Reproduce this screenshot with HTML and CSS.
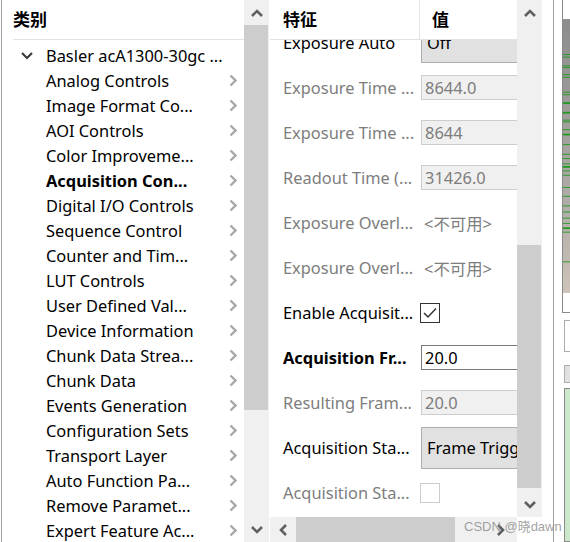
FILE: index.html
```html
<!DOCTYPE html>
<html lang="zh-CN">
<head>
    <meta charset="UTF-8">
    <title>Features</title>
    <link rel="stylesheet" href="styles.css">
</head>
<body>
    <div class="window">
        <!-- category tree -->
        <div class="category-pane">
            <div class="tree">
                <div class="pane-header"><span class="header-title">类别</span></div>
                <ul class="tree-list">
                    <li class="tree-item tree-root">
                        <span class="expander"><svg width="12" height="8" viewBox="0 0 12 8"><path d="M1 1 L6 6 L11 1" fill="none" stroke="#3c3c3c" stroke-width="2.2"/></svg></span>
                        <span class="tree-label">Basler acA1300-30gc ...</span>
                    </li>
                    <li class="tree-item"><span class="tree-label">Analog Controls</span><svg class="arrow" width="8" height="13" viewBox="0 0 8 13"><path d="M1.5 1.5 L6.5 6.5 L1.5 11.5" fill="none" stroke="#a8a8a8" stroke-width="2.4"/></svg></li>
                    <li class="tree-item"><span class="tree-label">Image Format Co...</span><svg class="arrow" width="8" height="13" viewBox="0 0 8 13"><path d="M1.5 1.5 L6.5 6.5 L1.5 11.5" fill="none" stroke="#a8a8a8" stroke-width="2.4"/></svg></li>
                    <li class="tree-item"><span class="tree-label">AOI Controls</span><svg class="arrow" width="8" height="13" viewBox="0 0 8 13"><path d="M1.5 1.5 L6.5 6.5 L1.5 11.5" fill="none" stroke="#a8a8a8" stroke-width="2.4"/></svg></li>
                    <li class="tree-item"><span class="tree-label">Color Improveme...</span><svg class="arrow" width="8" height="13" viewBox="0 0 8 13"><path d="M1.5 1.5 L6.5 6.5 L1.5 11.5" fill="none" stroke="#a8a8a8" stroke-width="2.4"/></svg></li>
                    <li class="tree-item selected"><span class="tree-label">Acquisition Con...</span><svg class="arrow" width="8" height="13" viewBox="0 0 8 13"><path d="M1.5 1.5 L6.5 6.5 L1.5 11.5" fill="none" stroke="#a8a8a8" stroke-width="2.4"/></svg></li>
                    <li class="tree-item"><span class="tree-label">Digital I/O Controls</span><svg class="arrow" width="8" height="13" viewBox="0 0 8 13"><path d="M1.5 1.5 L6.5 6.5 L1.5 11.5" fill="none" stroke="#a8a8a8" stroke-width="2.4"/></svg></li>
                    <li class="tree-item"><span class="tree-label">Sequence Control</span><svg class="arrow" width="8" height="13" viewBox="0 0 8 13"><path d="M1.5 1.5 L6.5 6.5 L1.5 11.5" fill="none" stroke="#a8a8a8" stroke-width="2.4"/></svg></li>
                    <li class="tree-item"><span class="tree-label">Counter and Tim...</span><svg class="arrow" width="8" height="13" viewBox="0 0 8 13"><path d="M1.5 1.5 L6.5 6.5 L1.5 11.5" fill="none" stroke="#a8a8a8" stroke-width="2.4"/></svg></li>
                    <li class="tree-item"><span class="tree-label">LUT Controls</span><svg class="arrow" width="8" height="13" viewBox="0 0 8 13"><path d="M1.5 1.5 L6.5 6.5 L1.5 11.5" fill="none" stroke="#a8a8a8" stroke-width="2.4"/></svg></li>
                    <li class="tree-item"><span class="tree-label">User Defined Val...</span><svg class="arrow" width="8" height="13" viewBox="0 0 8 13"><path d="M1.5 1.5 L6.5 6.5 L1.5 11.5" fill="none" stroke="#a8a8a8" stroke-width="2.4"/></svg></li>
                    <li class="tree-item"><span class="tree-label">Device Information</span><svg class="arrow" width="8" height="13" viewBox="0 0 8 13"><path d="M1.5 1.5 L6.5 6.5 L1.5 11.5" fill="none" stroke="#a8a8a8" stroke-width="2.4"/></svg></li>
                    <li class="tree-item"><span class="tree-label">Chunk Data Strea...</span><svg class="arrow" width="8" height="13" viewBox="0 0 8 13"><path d="M1.5 1.5 L6.5 6.5 L1.5 11.5" fill="none" stroke="#a8a8a8" stroke-width="2.4"/></svg></li>
                    <li class="tree-item"><span class="tree-label">Chunk Data</span><svg class="arrow" width="8" height="13" viewBox="0 0 8 13"><path d="M1.5 1.5 L6.5 6.5 L1.5 11.5" fill="none" stroke="#a8a8a8" stroke-width="2.4"/></svg></li>
                    <li class="tree-item"><span class="tree-label">Events Generation</span><svg class="arrow" width="8" height="13" viewBox="0 0 8 13"><path d="M1.5 1.5 L6.5 6.5 L1.5 11.5" fill="none" stroke="#a8a8a8" stroke-width="2.4"/></svg></li>
                    <li class="tree-item"><span class="tree-label">Configuration Sets</span><svg class="arrow" width="8" height="13" viewBox="0 0 8 13"><path d="M1.5 1.5 L6.5 6.5 L1.5 11.5" fill="none" stroke="#a8a8a8" stroke-width="2.4"/></svg></li>
                    <li class="tree-item"><span class="tree-label">Transport Layer</span><svg class="arrow" width="8" height="13" viewBox="0 0 8 13"><path d="M1.5 1.5 L6.5 6.5 L1.5 11.5" fill="none" stroke="#a8a8a8" stroke-width="2.4"/></svg></li>
                    <li class="tree-item"><span class="tree-label">Auto Function Pa...</span><svg class="arrow" width="8" height="13" viewBox="0 0 8 13"><path d="M1.5 1.5 L6.5 6.5 L1.5 11.5" fill="none" stroke="#a8a8a8" stroke-width="2.4"/></svg></li>
                    <li class="tree-item"><span class="tree-label">Remove Paramet...</span><svg class="arrow" width="8" height="13" viewBox="0 0 8 13"><path d="M1.5 1.5 L6.5 6.5 L1.5 11.5" fill="none" stroke="#a8a8a8" stroke-width="2.4"/></svg></li>
                    <li class="tree-item"><span class="tree-label">Expert Feature Ac...</span><svg class="arrow" width="8" height="13" viewBox="0 0 8 13"><path d="M1.5 1.5 L6.5 6.5 L1.5 11.5" fill="none" stroke="#a8a8a8" stroke-width="2.4"/></svg></li>
                </ul>
            </div>
            <div class="vscroll">
                <div class="scroll-btn"><svg width="12" height="8" viewBox="0 0 12 8"><path d="M1 7 L6 2 L11 7" fill="none" stroke="#606060" stroke-width="2.6"/></svg></div>
                <div class="scroll-track"><div class="thumb tree-thumb"></div></div>
                <div class="scroll-btn"><svg width="12" height="8" viewBox="0 0 12 8"><path d="M1 1 L6 6 L11 1" fill="none" stroke="#606060" stroke-width="2.6"/></svg></div>
            </div>
        </div>

        <!-- feature grid -->
        <div class="feature-pane">
            <div class="feature-main">
                <div class="feature-header">
                    <div class="col-name">特征</div>
                    <div class="col-value">值</div>
                </div>
                <div class="feature-body">
                    <div class="feature-list">
                        <div class="feature-row">
                            <span class="feature-name">Exposure Auto</span>
                            <div class="combo">Off</div>
                        </div>
                        <div class="feature-row disabled">
                            <span class="feature-name">Exposure Time ...</span>
                            <div class="value-input">8644.0</div>
                        </div>
                        <div class="feature-row disabled">
                            <span class="feature-name">Exposure Time ...</span>
                            <div class="value-input">8644</div>
                        </div>
                        <div class="feature-row disabled">
                            <span class="feature-name">Readout Time (...</span>
                            <div class="value-input">31426.0</div>
                        </div>
                        <div class="feature-row disabled">
                            <span class="feature-name">Exposure Overl...</span>
                            <span class="unavailable">&lt;不可用&gt;</span>
                        </div>
                        <div class="feature-row disabled">
                            <span class="feature-name">Exposure Overl...</span>
                            <span class="unavailable">&lt;不可用&gt;</span>
                        </div>
                        <div class="feature-row">
                            <span class="feature-name">Enable Acquisit...</span>
                            <div class="checkbox"><svg width="14" height="12" viewBox="0 0 14 12"><path d="M1 6 L5 10 L13 1.5" fill="none" stroke="#333" stroke-width="1.5"/></svg></div>
                        </div>
                        <div class="feature-row changed">
                            <span class="feature-name">Acquisition Fr...</span>
                            <div class="value-input editable">20.0</div>
                        </div>
                        <div class="feature-row disabled">
                            <span class="feature-name">Resulting Fram...</span>
                            <div class="value-input">20.0</div>
                        </div>
                        <div class="feature-row">
                            <span class="feature-name">Acquisition Sta...</span>
                            <div class="combo">Frame Trigger Wait</div>
                        </div>
                        <div class="feature-row disabled">
                            <span class="feature-name">Acquisition Sta...</span>
                            <div class="checkbox"></div>
                        </div>
                    </div>
                </div>
            </div>
            <div class="vscroll">
                <div class="scroll-btn"><svg width="12" height="8" viewBox="0 0 12 8"><path d="M1 7 L6 2 L11 7" fill="none" stroke="#606060" stroke-width="2.6"/></svg></div>
                <div class="scroll-track"><div class="thumb grid-thumb"></div></div>
                <div class="scroll-btn"><svg width="12" height="8" viewBox="0 0 12 8"><path d="M1 1 L6 6 L11 1" fill="none" stroke="#606060" stroke-width="2.6"/></svg></div>
            </div>
            <div class="hscroll">
                <div class="scroll-btn"><svg width="8" height="12" viewBox="0 0 8 12"><path d="M7 1 L2 6 L7 11" fill="none" stroke="#606060" stroke-width="2.6"/></svg></div>
                <div class="hthumb"></div>
                <div class="scroll-btn right-btn"><svg width="8" height="12" viewBox="0 0 8 12"><path d="M1 1 L6 6 L1 11" fill="none" stroke="#606060" stroke-width="2.6"/></svg></div>
            </div>
            <div class="corner"></div>
        </div>

        <!-- neighbouring window edge -->
        <div class="side-panel">
            <div class="side-divider"></div>
            <div class="side-content">
                <svg class="preview" width="8" height="313" viewBox="0 0 8 313">
                    <defs>
                        <linearGradient id="shade" x1="0" y1="0" x2="0" y2="1">
                            <stop offset="0" stop-color="#8c8c8c"/>
                            <stop offset="0.7" stop-color="#b2aea9"/>
                            <stop offset="1" stop-color="#cdc3b8"/>
                        </linearGradient>
                    </defs>
                    <rect width="8" height="313" fill="url(#shade)"/>
                    <g fill="#1e9a1e">
                        <rect y="40" width="8" height="1"/><rect y="43" width="8" height="1"/>
                        <rect y="53" width="8" height="1"/><rect y="55" width="8" height="1"/>
                        <rect y="63" width="8" height="1"/><rect y="66" width="8" height="1"/>
                        <rect y="83" width="8" height="1"/><rect y="86" width="8" height="1"/>
                        <rect y="95" width="8" height="2"/><rect y="106" width="8" height="2"/>
                        <rect y="115" width="8" height="1"/><rect y="117" width="8" height="1"/>
                        <rect y="126" width="8" height="1"/><rect y="131" width="8" height="2"/>
                        <rect y="143" width="8" height="1"/><rect y="154" width="8" height="1"/>
                        <rect y="159" width="8" height="1"/><rect y="165" width="8" height="1"/>
                        <rect y="168" width="8" height="2"/><rect y="173" width="8" height="1"/>
                        <rect y="178" width="8" height="1"/><rect y="192" width="8" height="1"/>
                        <rect y="202" width="8" height="1"/><rect y="213" width="8" height="1"/>
                        <rect y="220" width="8" height="1"/><rect y="227" width="8" height="1"/>
                        <rect y="233" width="8" height="1"/><rect y="238" width="8" height="2"/>
                        <rect y="243" width="8" height="1"/><rect y="277" width="8" height="1"/>
                    </g>
                </svg>
                <div class="side-box"></div>
                <div class="side-button"></div>
                <div class="side-log"></div>
            </div>
        </div>

        <div class="watermark">CSDN @晓dawn</div>
    </div>
</body>
</html>
```

FILE: styles.css
```css
* {
    margin: 0;
    padding: 0;
    box-sizing: border-box;
}

body {
    font-family: "Noto Sans", "Noto Sans CJK SC", sans-serif;
    font-size: 16.4px;
    color: #000;
    background: #fff;
    overflow: hidden;
}

.window {
    position: relative;
    display: flex;
    width: 570px;
    height: 542px;
    overflow: hidden;
}

/* Category tree */
.category-pane {
    display: flex;
    width: 270px;
    height: 542px;
    padding-left: 1px;
}

.tree {
    flex: 1;
    border-left: 1px solid #a0a0a0;
    overflow: hidden;
}

.pane-header {
    height: 40px;
    display: flex;
    align-items: center;
    margin-left: 11px;
    border-bottom: 1px solid #e3e3e3;
    padding-bottom: 2px;
}

.header-title {
    font-family: "Noto Sans CJK SC", sans-serif;
    font-weight: bold;
    font-size: 17px;
}

.tree-list {
    list-style: none;
    margin-top: 3px;
}

.tree-item {
    height: 25px;
    display: flex;
    align-items: center;
    padding-left: 44px;
    padding-right: 7px;
    white-space: nowrap;
}

.tree-root {
    padding-left: 19px;
}

.expander {
    width: 25px;
    display: flex;
    align-items: center;
}

.tree-label {
    flex: 1;
    overflow: hidden;
}

.tree-item.selected .tree-label {
    font-weight: bold;
}

.arrow {
    flex-shrink: 0;
}

/* Scrollbars */
.vscroll {
    width: 25px;
    background: #f0f0f0;
    display: flex;
    flex-direction: column;
}

.scroll-btn {
    height: 25px;
    width: 25px;
    flex-shrink: 0;
    display: flex;
    align-items: center;
    justify-content: center;
}

.scroll-track {
    flex: 1;
}

.thumb {
    width: 24px;
    background: #cdcdcd;
}

.tree-thumb {
    height: 385px;
}

.grid-thumb {
    margin-top: 220px;
    height: 243px;
}

.category-pane .vscroll {
    margin-right: 1px;
}

/* Feature grid */
.feature-pane {
    display: grid;
    grid-template-columns: 247px 25px;
    grid-template-rows: 517px 25px;
    width: 272px;
}

.feature-main {
    display: flex;
    flex-direction: column;
    overflow: hidden;
}

.feature-header {
    height: 40px;
    flex-shrink: 0;
    display: flex;
    border-bottom: 1px solid #e3e3e3;
    font-family: "Noto Sans CJK SC", sans-serif;
    font-weight: bold;
    font-size: 17px;
}

.col-name {
    width: 150px;
    padding-left: 13px;
    padding-bottom: 2px;
    border-right: 1px solid #e3e3e3;
    display: flex;
    align-items: center;
}

.col-value {
    padding-left: 12px;
    padding-bottom: 2px;
    display: flex;
    align-items: center;
}

.feature-body {
    flex: 1;
    overflow: hidden;
}

.feature-list {
    margin-top: -21px;
}

.feature-row {
    height: 45px;
    display: flex;
    align-items: center;
    white-space: nowrap;
}

.feature-row:first-child {
    height: 46px;
}

.feature-name {
    width: 150px;
    flex-shrink: 0;
    padding-left: 13px;
    overflow: hidden;
}

.feature-row.disabled .feature-name {
    color: #7d7d7d;
}

.feature-row.changed .feature-name {
    font-weight: bold;
}

.value-input {
    flex-shrink: 0;
    width: 110px;
    height: 25px;
    margin-left: 1px;
    padding-left: 3px;
    display: flex;
    align-items: center;
    background: #f0f0f0;
    border: 1px solid #cccccc;
    color: #7d7d7d;
}

.value-input.editable {
    background: #fff;
    border-color: #7a7a7a;
    color: #000;
}

.combo {
    flex-shrink: 0;
    width: 130px;
    height: 42px;
    margin-left: 1px;
    padding-left: 5px;
    display: flex;
    align-items: center;
    background: #e1e1e1;
    border: 1px solid #adadad;
    overflow: hidden;
}

.unavailable {
    padding-left: 4px;
    color: #7d7d7d;
}

.checkbox {
    width: 20px;
    height: 20px;
    border: 1px solid #333;
    background: #fff;
    display: flex;
    align-items: center;
    justify-content: center;
}

.feature-row.disabled .checkbox {
    border-color: #cccccc;
}

.hscroll {
    display: flex;
    background: #f0f0f0;
}

.hthumb {
    width: 159px;
    margin-left: 1px;
    background: #cdcdcd;
}

.right-btn {
    margin-left: auto;
    justify-content: flex-start;
    padding-left: 5px;
}

.corner {
    background: #fff;
}

/* Edge of the next window */
.side-panel {
    flex: 1;
    display: flex;
}

.side-divider {
    width: 1px;
    margin-left: 11px;
    background: #a0a0a0;
}

.side-content {
    margin-left: 8px;
    flex: 1;
    display: flex;
    flex-direction: column;
}

.preview {
    display: block;
    border-left: 1px solid #8a8a8a;
    border-bottom: 1px solid #8a8a8a;
}

.side-box {
    height: 32px;
    margin-top: 7px;
    margin-left: 2px;
    border: 1px solid #adadad;
    border-right: none;
}

.side-button {
    height: 18px;
    margin-top: 13px;
    margin-left: 2px;
    background: #e1e1e1;
    border: 1px solid #adadad;
    border-right: none;
}

.side-log {
    flex: 1;
    margin-top: 5px;
    margin-left: 2px;
    background: #cbe8cc;
    border: 1px solid #8a8a8a;
    border-right: none;
}

.watermark {
    position: absolute;
    left: 464px;
    top: 516px;
    font-family: "Liberation Sans", "Noto Sans CJK SC", sans-serif;
    font-size: 13px;
    color: rgba(130, 130, 130, 0.75);
}
```
